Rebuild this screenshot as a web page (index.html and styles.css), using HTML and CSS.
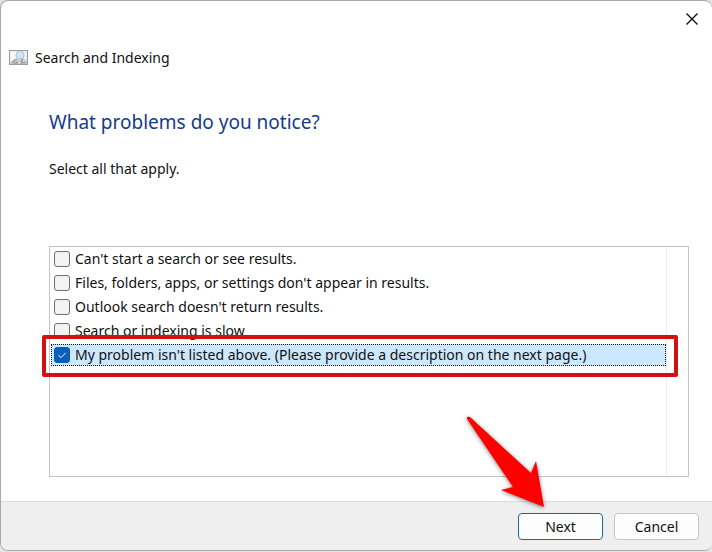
FILE: index.html
```html
<!DOCTYPE html>
<html lang="en">
  <head>
    <meta charset="UTF-8" />
    <meta name="viewport" content="width=device-width, initial-scale=1.0" />
    <title>Search and Indexing</title>
    <link rel="stylesheet" href="styles.css">
  </head>
  <body>
    <div class="dialog">
      <div class="titlebar">
        <button type="button" class="close" aria-label="Close">
          <svg width="12" height="12" viewBox="0 0 12 12">
            <path d="M0.5 0.5L11.5 11.5M11.5 0.5L0.5 11.5" stroke="#111" stroke-width="1.4" fill="none" />
          </svg>
        </button>
      </div>

      <header class="header">
        <svg class="app-icon" width="19" height="16" viewBox="0 0 19 16">
          <rect x="0.5" y="0.5" width="18" height="14" fill="#eceeef" stroke="#9b9b9b" />
          <path d="M2 2L7 2L5 8L2 11Z" fill="#fafafa" />
          <path d="M1 13L5 9L8 10L14 8L18 11V14H1Z" fill="#c3c7c8" />
          <circle cx="11" cy="5" r="4" fill="#cfe2f6" stroke="#b3c4d4" />
          <path d="M3 13L6 10L8 9M5 13H8L10 11M12 12L14 9M12 13L16 12.5" stroke="#83898c" fill="none" />
          <path d="M9 12H11M14 11H16" stroke="#f5f5f5" fill="none" />
        </svg>
        <span>Search and Indexing</span>
      </header>

      <form class="content" id="problems">
        <h1>What problems do you notice?</h1>
        <p>Select all that apply.</p>

        <div class="list">
          <div class="rows">
            <label class="row"><input type="checkbox" name="problem" /><span>Can't start a search or see results.</span></label>
            <label class="row"><input type="checkbox" name="problem" /><span>Files, folders, apps, or settings don't appear in results.</span></label>
            <label class="row"><input type="checkbox" name="problem" /><span>Outlook search doesn't return results.</span></label>
            <label class="row"><input type="checkbox" name="problem" /><span>Search or indexing is slow</span></label>
            <label class="row selected"><input type="checkbox" name="problem" checked /><span>My problem isn't listed above. (Please provide a description on the next page.)</span></label>
          </div>
        </div>
      </form>

      <footer class="footer">
        <button type="submit" form="problems" class="btn primary">
          Next
          <svg class="arrow" width="90" height="100" viewBox="460 412 90 100">
            <path d="M467 419Q466 416 470 417L531 473L536 461L544 507L501 490L513 487Z" fill="#f00" />
          </svg>
        </button>
        <button type="button" class="btn">Cancel</button>
      </footer>
    </div>
  </body>
</html>
```
FILE: styles.css
```css
* {
  box-sizing: border-box;
}
body {
  margin: 0;
  display: flex;
  min-height: 100vh;
  padding-bottom: 1px;
  background-color: #e4e4e4;
  font-family: "Noto Sans", "Open Sans", sans-serif;
  font-size: 14px;
  line-height: 20px;
  color: #111;
}
.dialog {
  flex: 1;
  display: flex;
  flex-direction: column;
  overflow: hidden;
  background-color: white;
  border: 1px solid #a8a8a8;
  border-right: none;
  border-radius: 8px;
}
.titlebar {
  display: flex;
  justify-content: flex-end;
}
.close {
  display: flex;
  align-items: center;
  justify-content: center;
  width: 40px;
  height: 36px;
  padding: 0;
  background: none;
  border: none;
}
.header {
  display: flex;
  align-items: center;
  gap: 7px;
  padding: 11px 8px 9px;
}
.content {
  flex: 1;
  display: flex;
  flex-direction: column;
  padding: 32px 23px 24px 48px;
}
h1 {
  margin: 0;
  font-size: 19px;
  font-weight: normal;
  line-height: 26px;
  color: #143c8c;
}
p {
  margin: 24px 0 67px;
}
.list {
  flex: 1;
  padding: 1px 21px 0 1px;
  border: 1px solid #c4c4c4;
  display: flex;
}
.rows {
  flex: 1;
  display: flex;
  flex-direction: column;
  gap: 2px;
  border-right: 1px solid #ececf0;
}
.row {
  display: flex;
  align-items: center;
  gap: 5px;
  height: 22px;
  padding-left: 3px;
  white-space: nowrap;
}
.row input {
  appearance: none;
  width: 16px;
  height: 16px;
  margin: 0;
  background-color: #f3f3f3;
  border: 1px solid #707070;
  border-radius: 3px;
}
.row input:checked {
  background: #0a5fb8 url("data:image/svg+xml,%3Csvg xmlns='http://www.w3.org/2000/svg' viewBox='0 0 14 14'%3E%3Cpath d='M3.5 7.2L6 9.6L10.8 4.8' fill='none' stroke='white'/%3E%3C/svg%3E");
  border-color: #0a5fb8;
}
.selected {
  position: relative;
  background-color: #cce8ff;
  outline: 1px dotted #111;
  outline-offset: -1px;
}
/* highlight frame around the chosen row */
.selected::after {
  content: "";
  position: absolute;
  inset: -9px -12px -11px -9px;
  border: 4px solid #d21212;
  border-radius: 2px;
}
.footer {
  display: flex;
  justify-content: flex-end;
  gap: 11px;
  padding: 11px 13px 10px;
  background-color: #efefef;
  border-top: 1px solid #dcdcdc;
}
.btn {
  position: relative;
  width: 85px;
  height: 27px;
  padding: 0;
  font: inherit;
  color: #111;
  background-color: #fdfdfd;
  border: 1px solid #c6c6c6;
  border-radius: 4px;
}
.primary {
  border-color: #1c6a9c;
}
.arrow {
  position: absolute;
  right: 52px;
  bottom: 27px;
  filter: drop-shadow(0 1px 2px rgba(0, 0, 0, 0.5));
  pointer-events: none;
}
```
